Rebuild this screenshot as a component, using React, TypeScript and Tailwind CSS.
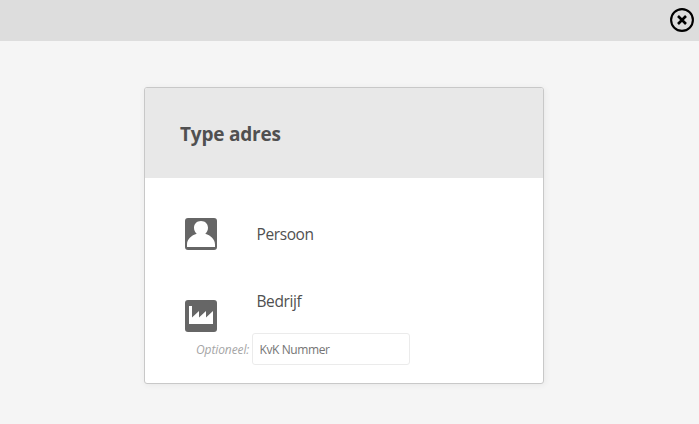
function CloseIcon() {
  return (
    <svg width="24" height="24" viewBox="0 0 24 24" fill="none" stroke="#000">
      <circle cx="12" cy="12" r="10.9" strokeWidth="2.1" />
      <path d="M8 8l8 8M16 8l-8 8" strokeWidth="2.6" />
    </svg>
  );
}

function PersonIcon() {
  return (
    <svg width="32" height="32" viewBox="0 0 32 32">
      <rect width="32" height="32" rx="3" fill="#666" />
      <path
        d="M16 3c4.200 0 7 2.900 7 6.800 0 2.300-1 4.600-2.700 6C25.500 17.200 30 21.500 30 26.500V29H2v-2.500c0-5 4.500-9.300 9.700-10.700C10 14.400 9 12.100 9 9.800 9 5.900 11.800 3 16 3z"
        fill="#fff"
      />
    </svg>
  );
}

function FactoryIcon() {
  return (
    <svg width="32" height="32" viewBox="0 0 32 32">
      <rect width="32" height="32" rx="3" fill="#666" />
      <path d="M4 6h3v11.500l7-6.500v6.500l7-6.500v6.500l7-6.500v13H4z" fill="#fff" />
    </svg>
  );
}

export default function App() {
  return (
    <div className="h-[424px] bg-[#f5f5f5] font-['Open_Sans','Noto_Sans',sans-serif] text-[#505050]">
      <header className="flex h-[41px] items-start justify-end bg-[#dddddd] pt-2 pr-[5px]">
        <button type="button" aria-label="Sluiten">
          <CloseIcon />
        </button>
      </header>

      <main className="pt-[46px] pl-36">
        <div className="h-[297px] w-[400px] overflow-hidden rounded-[3px] border border-[#c8c8c8] bg-white shadow-[1px_1px_6px_rgba(0,0,0,0.06)]">
          <div className="flex h-[90px] items-center bg-[#e8e8e8] pt-0.5 pl-[35px]">
            <h1 className="text-[19px] leading-6 font-bold tracking-[-0.2px]">Type adres</h1>
          </div>

          <div className="flex items-center pt-10 pl-10">
            <PersonIcon />
            <span className="ml-[39.5px] text-[15.5px] leading-5 tracking-[-0.4px]">Persoon</span>
          </div>

          <div className="flex items-start pt-[41px] pl-10">
            <div className="pt-[9px]">
              <FactoryIcon />
            </div>
            <span className="ml-[39.5px] text-[15.5px] leading-5 tracking-[-0.4px]">Bedrijf</span>
          </div>

          <div className="flex items-center pt-px pl-[51px]">
            <label htmlFor="kvk" className="w-14 pt-0.5 text-xs whitespace-nowrap text-[#a5a5a5] italic tracking-[-0.1px]">
              Optioneel:
            </label>
            <input
              id="kvk"
              type="text"
              placeholder="KvK Nummer"
              className="h-8 w-[158px] rounded-[3px] border border-[#ebebeb] px-[6.5px] text-xs tracking-[-0.4px] placeholder:text-[#757575]"
            />
          </div>
        </div>
      </main>
    </div>
  );
}
